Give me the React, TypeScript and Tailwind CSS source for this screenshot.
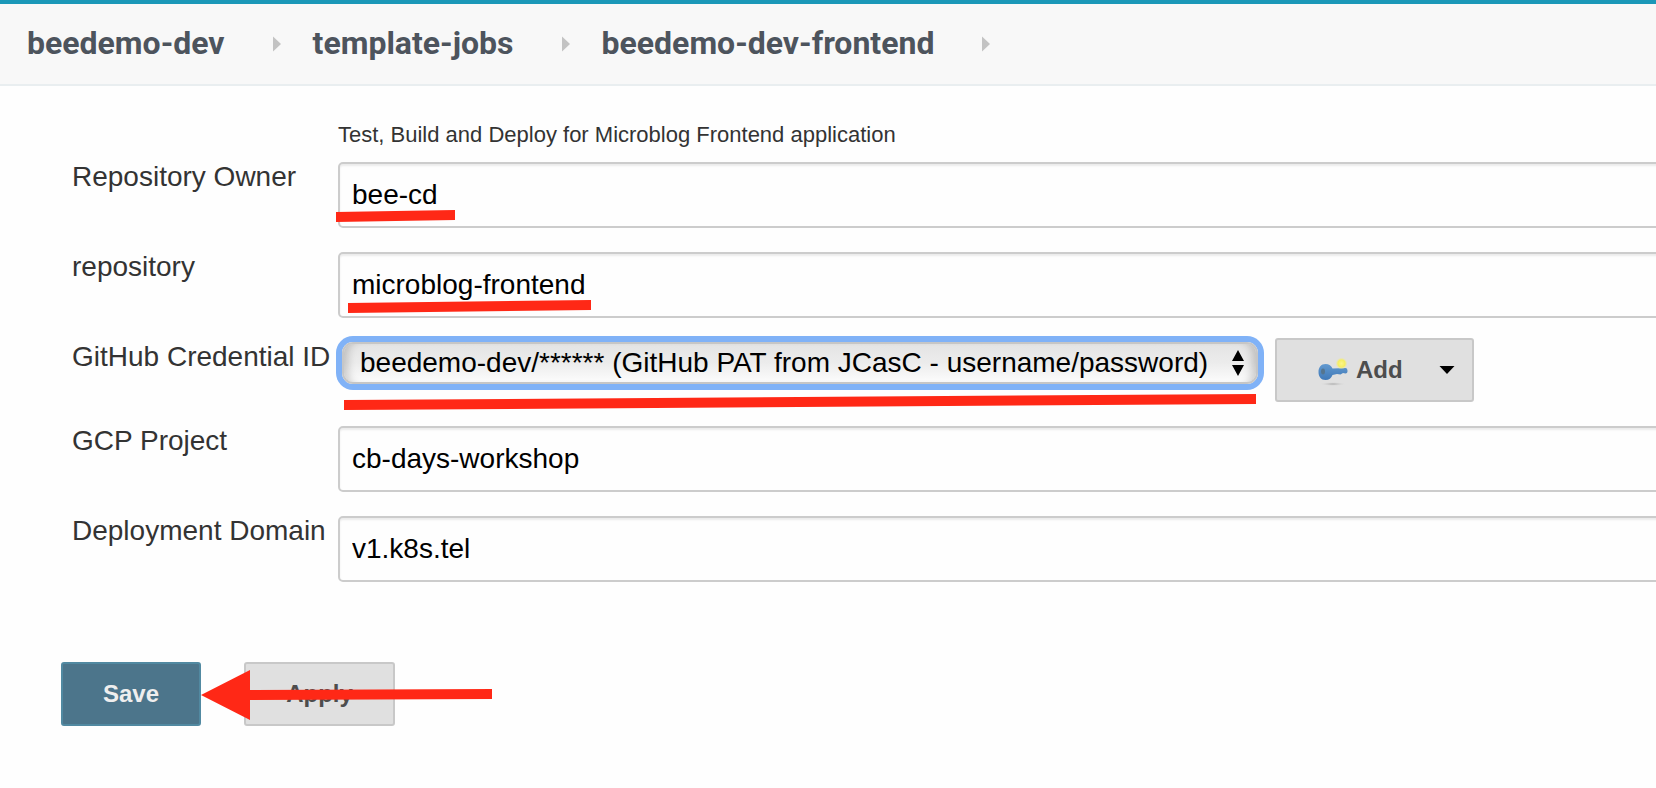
import type { ReactNode } from "react";

const crumbs = ["beedemo-dev", "template-jobs", "beedemo-dev-frontend"];

function Breadcrumbs() {
  return (
    <nav
      aria-label="Breadcrumb"
      className="flex h-[86px] items-center overflow-hidden border-t-4 border-b-2 border-t-[#1b98b8] border-b-[#e9eef0] bg-[#f8f8f8] pb-0.5 pl-[27px]"
    >
      {crumbs.map((name) => (
        <div key={name} className="flex items-center">
          <a
            href="#"
            className="font-[Roboto,sans-serif] text-[32px] leading-10 font-bold whitespace-nowrap text-[#4d545d]"
          >
            {name}
          </a>
          <svg className="mt-0.5 mr-8 ml-12 h-4 w-2" viewBox="0 0 8 16" aria-hidden="true">
            <path d="M0 0.5 L8 8 L0 15.5 Z" fill="#c3c3c3" />
          </svg>
        </div>
      ))}
    </nav>
  );
}

function Row({ id, label, children }: { id: string; label: string; children: ReactNode }) {
  return (
    <div className="flex items-start pb-5">
      <label htmlFor={id} className="w-[266px] shrink-0 pt-[3px] text-[28px] leading-8 whitespace-nowrap text-[#333]">
        {label}
      </label>
      {children}
    </div>
  );
}

function TextRow({ id, label, value, mark }: { id: string; label: string; value: string; mark?: ReactNode }) {
  return (
    <Row id={id} label={label}>
      <div className="relative min-w-0 flex-1 pt-1">
        <input
          id={id}
          type="text"
          defaultValue={value}
          className="block h-[66px] w-full rounded-[5px] border-2 border-[#ccc] bg-[#fefefe] px-3 text-[28px] text-black shadow-[inset_0_2px_2px_rgba(0,0,0,0.075)] outline-none"
        />
        {mark}
      </div>
    </Row>
  );
}

function KeyIcon() {
  return (
    <svg className="h-8 w-8 shrink-0" viewBox="0 0 32 32" aria-hidden="true">
      <defs>
        <radialGradient id="glow">
          <stop offset="0" stopColor="#fbf58a" />
          <stop offset="0.6" stopColor="#f6ee62" />
          <stop offset="1" stopColor="#efe9a0" stopOpacity="0" />
        </radialGradient>
        <linearGradient id="key" x1="0" y1="0" x2="0" y2="1">
          <stop offset="0" stopColor="#6299cf" />
          <stop offset="1" stopColor="#4079b8" />
        </linearGradient>
        <radialGradient id="shade">
          <stop offset="0" stopColor="#a9a9a9" />
          <stop offset="1" stopColor="#dedede" stopOpacity="0" />
        </radialGradient>
      </defs>
      <ellipse cx="16" cy="30" rx="13" ry="2" fill="url(#shade)" />
      <path
        d="M8.500 10 C12 10 14.500 12 15.500 14.500 L28.500 14 C30 14 30.500 15.500 30.500 17 C30.500 18.500 30 19.500 28.500 19.500 L26 19 L23.500 20.500 L20 20 L15.500 21 C14.500 24 12 26 8.500 26 C4 26 1.500 22.500 1.500 18 C1.500 13.500 4 10 8.500 10 Z"
        fill="url(#key)"
      />
      <ellipse cx="6" cy="17.500" rx="2" ry="3" fill="#55758f" />
      <circle cx="24.500" cy="9.500" r="6" fill="url(#glow)" />
    </svg>
  );
}

export default function App() {
  return (
    <div className="min-h-screen overflow-x-hidden bg-[#fefefe] font-['Liberation_Sans',Arial,sans-serif]">
      <Breadcrumbs />
      <form className="-mr-2" onSubmit={(e) => e.preventDefault()}>
        <p className="pt-[35px] pb-[9px] pl-[338px] text-[22px] leading-7 text-[#333]">
          Test, Build and Deploy for Microblog Frontend application
        </p>
        <div className="pl-[72px]">
          <TextRow
            id="owner"
            label="Repository Owner"
            value="bee-cd"
            mark={
              <svg className="absolute top-[52px] -left-0.5 h-3 w-[119px]" viewBox="0 0 119 12" aria-hidden="true">
                <path d="M0 2 L119 0 V10 L0 12 Z" fill="#ff2816" />
              </svg>
            }
          />
          <TextRow
            id="repository"
            label="repository"
            value="microblog-frontend"
            mark={
              <svg className="absolute top-[52px] left-2.5 h-[13px] w-[243px]" viewBox="0 0 243 13" aria-hidden="true">
                <path d="M0 3 L243 0 V10 L0 13 Z" fill="#ff2816" />
              </svg>
            }
          />
          <Row id="credential" label="GitHub Credential ID">
            <div className="flex items-start gap-[17px] pl-1">
              <div className="relative mt-1">
                <select
                  id="credential"
                  className="block h-[42px] w-[916px] appearance-none rounded-[11px] border-2 border-[#c6c6c6] bg-linear-to-b from-[#e4e4e4] via-[#ececec] to-[#fcfcfc] pr-12 pl-4 text-[28px] leading-8 text-black shadow-[0_0_0_6px_#80b2f7,inset_10px_0_8px_-6px_rgba(0,0,0,0.18),inset_-10px_0_8px_-6px_rgba(0,0,0,0.18)] outline-none"
                >
                  <option>beedemo-dev/****** (GitHub PAT from JCasC - username/password)</option>
                </select>
                <svg
                  className="pointer-events-none absolute top-2 right-3.5 h-[26px] w-3"
                  viewBox="0 0 12 26"
                  aria-hidden="true"
                >
                  <path d="M6 0 L12 11 H0 Z M0 15 H12 L6 26 Z" fill="#000" />
                </svg>
                <svg className="absolute top-[52px] left-0.5 h-4 w-[912px]" viewBox="0 0 912 16" aria-hidden="true">
                  <path d="M0 6 L912 0 V10 L0 16 Z" fill="#ff2816" />
                </svg>
              </div>
              <button
                type="button"
                className="flex h-16 w-[199px] shrink-0 items-center rounded-[3px] border-2 border-[#c8c8c8] bg-[#e0e0e0] pl-10 text-2xl font-bold text-[#4d4d4d]"
              >
                <KeyIcon />
                <span className="ml-[7px]">Add</span>
                <svg className="ml-9 h-2 w-4" viewBox="0 0 16 8" aria-hidden="true">
                  <path d="M0.5 0 H15.500 L8 8 Z" fill="#000" />
                </svg>
              </button>
            </div>
          </Row>
          <TextRow id="project" label="GCP Project" value="cb-days-workshop" />
          <TextRow id="domain" label="Deployment Domain" value="v1.k8s.tel" />
        </div>
        <div className="relative flex gap-[43px] pt-[60px] pb-12 pl-[61px]">
          <button
            type="submit"
            className="h-16 w-[140px] rounded-[3px] border-2 border-[#5189a1] bg-[#4c758b] text-2xl font-bold text-[#eee]"
          >
            Save
          </button>
          <button
            type="button"
            className="h-16 w-[151px] rounded-[3px] border-2 border-[#c8c8c8] bg-[#e0e0e0] text-2xl font-bold text-[#4d4d4d]"
          >
            Apply
          </button>
          <svg className="absolute top-[68px] left-[201px] h-[50px] w-[291px]" viewBox="0 0 291 50" aria-hidden="true">
            <path d="M0 25 L49 0 V20 L291 19 V29 L49 30 V50 Z" fill="#ff2816" />
          </svg>
        </div>
      </form>
    </div>
  );
}
